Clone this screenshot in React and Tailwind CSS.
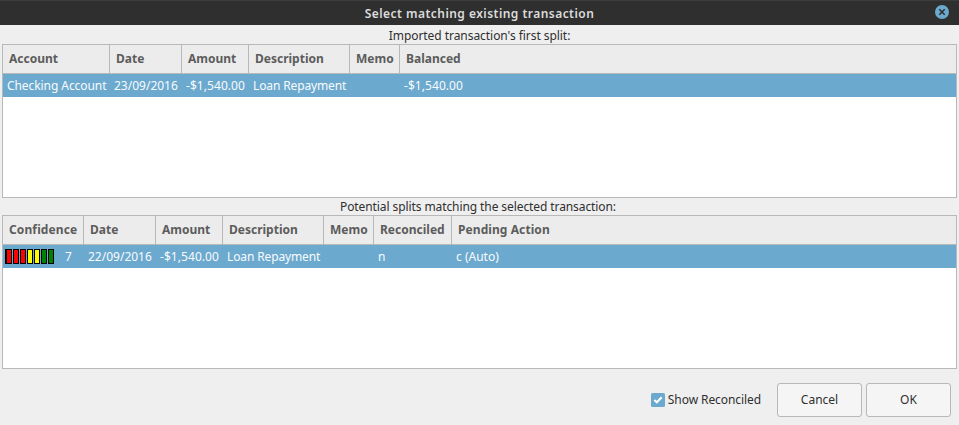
import React from "react";

const BARS = ["bg-[#ff0000]", "bg-[#ff0000]", "bg-[#ff0000]", "bg-[#ffff00]", "bg-[#ffff00]", "bg-[#008000]", "bg-[#008000]"];

function Confidence() {
  return (
    <span className="flex items-center">
      <span className="flex h-[15px] gap-px">
        {BARS.map((color, i) => (
          <span key={i} className={"h-[15px] w-[6px] border border-black first:w-[7px] first:border-l-2 " + color} />
        ))}
      </span>
      <span className="ml-[11px]">7</span>
    </span>
  );
}

const IMPORTED = [
  { title: "Account", width: "w-[107px]", value: "Checking Account", tracking: "tracking-[-0.07px]" },
  { title: "Date", width: "w-[72px]", value: "23/09/2016" },
  { title: "Amount", width: "w-[67px]", value: "-$1,540.00", tracking: "tracking-[0.06px]" },
  { title: "Description", width: "w-[101px]", value: "Loan Repayment", tracking: "tracking-[-0.13px]" },
  { title: "Memo", width: "w-[50px]", value: "" },
  { title: "Balanced", width: "flex-1", value: "-$1,540.00", tracking: "tracking-[0.06px]" },
];

const MATCHES = [
  { title: "Confidence", width: "w-[81px]", value: <Confidence />, pad: "pl-[2px]", titleTracking: "tracking-[0.12px]" },
  { title: "Date", width: "w-[72px]", value: "22/09/2016" },
  { title: "Amount", width: "w-[67px]", value: "-$1,540.00", tracking: "tracking-[0.06px]" },
  { title: "Description", width: "w-[101px]", value: "Loan Repayment", tracking: "tracking-[-0.13px]" },
  { title: "Memo", width: "w-[50px]", value: "" },
  { title: "Reconciled", width: "w-[78px]", value: "n" },
  { title: "Pending Action", width: "flex-1", value: "c (Auto)", titleTracking: "tracking-[0.08px]" },
];

function Table({ columns }) {
  return (
    <section className="mx-[2px] h-[154px] border border-[#b8b8b8] bg-white">
      <div className="flex h-[29px] border-b border-[#b8b8b8] bg-[#ececec] font-bold text-[#5c5c5c]">
        {columns.map((c) => (
          <div key={c.title} className={"flex shrink-0 items-center border-r border-[#b8b8b8] pl-[6px] last:border-r-0 " + c.width + " " + (c.titleTracking || "")}>
            {c.title}
          </div>
        ))}
      </div>
      <div className="flex h-[23px] bg-[#6ca9ce] text-[#f8fbfd]">
        {columns.map((c) => (
          <div key={c.title} className={"flex shrink-0 items-center " + c.width + " " + (c.pad || "pl-[4px]") + " " + (c.tracking || "")}>
            {c.value}
          </div>
        ))}
      </div>
    </section>
  );
}

export default function App() {
  return (
    <div className="flex h-[425px] w-[959px] flex-col overflow-hidden whitespace-nowrap bg-[#efefef] font-['Noto_Sans',sans-serif] text-[12px] leading-4 text-[#303030]">
      <header className="flex h-[25px] shrink-0 items-center border-t border-[#3c3c3c] bg-[#2f2f2f] pr-[10px] text-[#dcdcdc]">
        <h1 className="flex-1 pl-[24px] pt-px text-center font-semibold tracking-[0.46px]">Select matching existing transaction</h1>
        <svg className="mb-[2px]" width="14" height="14" viewBox="0 0 14 14" aria-label="Close">
          <circle cx="7" cy="7" r="7" fill="#6ca9ce" />
          <path d="M4.3 4.3 9.7 9.7M9.7 4.3 4.3 9.7" stroke="#2f2f2f" strokeWidth="1.6" />
        </svg>
      </header>
      <p className="flex h-[19px] shrink-0 items-center justify-center pt-[3px] tracking-[-0.05px]">Imported transaction's first split:</p>
      <Table columns={IMPORTED} />
      <p className="flex h-[17px] shrink-0 items-center justify-center pr-[3px] tracking-[-0.09px]">Potential splits matching the selected transaction:</p>
      <Table columns={MATCHES} />
      <footer className="flex flex-1 items-start justify-end pr-2 pt-[14px]">
        <label className="mr-4 flex h-[34px] items-center gap-[3px] tracking-[-0.08px]">
          <svg width="14" height="14" viewBox="0 0 14 14">
            <rect width="14" height="14" rx="1.5" fill="#6ca9ce" />
            <path d="M3.3 7 5.8 9.3 10.7 4.3" fill="none" stroke="white" strokeWidth="2" />
          </svg>
          Show Reconciled
        </label>
        <button className="mr-1 h-[34px] w-[85px] rounded-[3px] border border-[#b8b8b8] bg-[#f5f5f5]">Cancel</button>
        <button className="h-[34px] w-[85px] rounded-[3px] border border-[#b8b8b8] bg-[#f5f5f5]">OK</button>
      </footer>
    </div>
  );
}
